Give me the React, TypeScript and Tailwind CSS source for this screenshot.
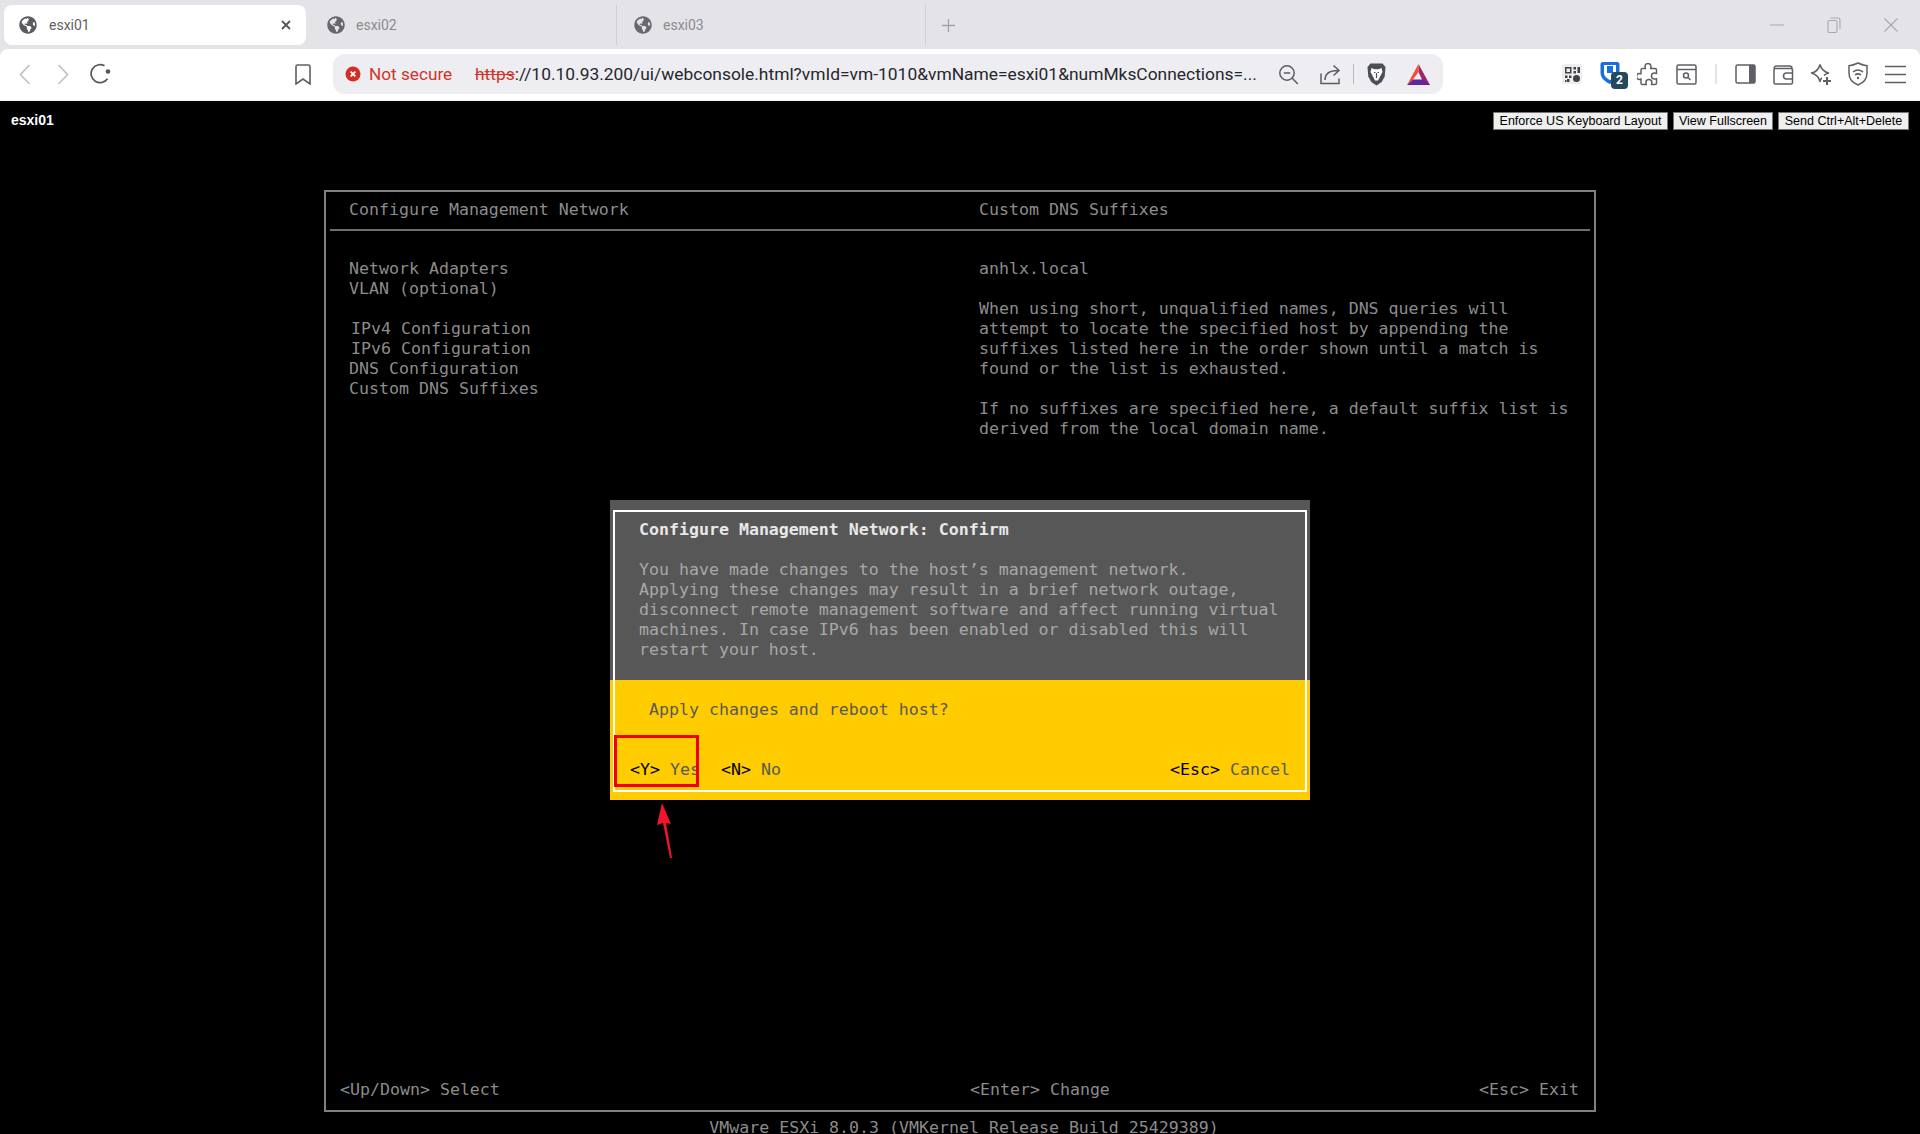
import React from "react";
import { FaGlobeAmericas } from "react-icons/fa";

const uiFont = "font-['Roboto','Liberation_Sans',sans-serif]";
const termFont = "font-['DejaVu_Sans_Mono','Liberation_Mono',monospace] text-[16.6px] leading-[20px] whitespace-pre";

const leftRows = ["Network Adapters", "VLAN (optional)", "", "IPv4 Configuration", "IPv6 Configuration", "DNS Configuration", "Custom DNS Suffixes"];
const rightRows = [
  "anhlx.local",
  "",
  "When using short, unqualified names, DNS queries will",
  "attempt to locate the specified host by appending the",
  "suffixes listed here in the order shown until a match is",
  "found or the list is exhausted.",
  "",
  "If no suffixes are specified here, a default suffix list is",
  "derived from the local domain name.",
];

const Slot = ({ children }: { children: React.ReactNode }) => (
  <div className="w-[38px] h-[40px] shrink-0 flex items-center justify-center relative">{children}</div>
);

const InactiveTab = ({ name, pad }: { name: string; pad: string }) => (
  <div className={`w-[309px] h-[40px] flex items-center gap-[11px] ${pad} border-r border-[#cfcfd4] text-[14px] text-[#8b8b8f]`}>
    <FaGlobeAmericas className="text-[#66686d]" size={18} />
    <span>{name}</span>
  </div>
);

const TabBar = () => (
  <div className={`h-[49px] shrink-0 bg-[#e3e3e8] flex items-center pl-[4px] pt-[1px] ${uiFont}`}>
    <div className="w-[302px] h-[40px] bg-white rounded-lg flex items-center pl-[15px] pr-[14px] text-[14px] text-[#5f6064]">
      <FaGlobeAmericas className="text-[#5a5c61]" size={18} />
      <span className="ml-[12px]">esxi01</span>
      <svg className="ml-auto" width="12" height="12" viewBox="0 0 12 12" fill="none" stroke="#55565a" strokeWidth="1.8">
        <path d="M2 2l8 8M10 2l-8 8" />
      </svg>
    </div>
    <div className="w-[2px]" />
    <InactiveTab name="esxi02" pad="pl-[19px]" />
    <InactiveTab name="esxi03" pad="pl-[17px]" />
    <svg className="ml-[16px]" width="13" height="13" viewBox="0 0 13 13" stroke="#a2a2a6" strokeWidth="1.3">
      <path d="M6.500 0v13M0 6.500h13" />
    </svg>
    <div className="ml-auto mr-[1px] flex">
      <div className="w-[57px] h-[40px] flex items-center justify-center">
        <svg width="14" height="2" viewBox="0 0 14 2" stroke="#a9a9ad"><path d="M0 1h14" /></svg>
      </div>
      <div className="w-[57px] h-[40px] flex items-center justify-center">
        <svg width="14" height="16" viewBox="0 0 14 16" fill="none" stroke="#a9a9ad" strokeWidth="1.1">
          <rect x="1" y="3.500" width="9" height="12" rx="1.500" />
          <path d="M3.500 1h7.500a2 2 0 0 1 2 2v9" />
        </svg>
      </div>
      <div className="w-[57px] h-[40px] flex items-center justify-center">
        <svg width="14" height="14" viewBox="0 0 14 14" stroke="#a9a9ad" strokeWidth="1.1"><path d="M0.500 0.500l13 13M13.500 0.500l-13 13" /></svg>
      </div>
    </div>
  </div>
);

const UrlBar = () => (
  <div className="ml-[11px] w-[1110px] h-[40px] rounded-xl bg-[#ededf2] flex items-center pl-[12px] shrink-0">
    <svg width="16" height="16" viewBox="0 0 16 16">
      <circle cx="8" cy="8" r="7.500" fill="#cf2f28" />
      <path d="M5.700 5.700l4.600 4.600M10.300 5.700l-4.600 4.600" stroke="#fff" strokeWidth="1.800" />
    </svg>
    <span className="ml-[8px] pt-[1px] w-[106px] text-[17.2px] text-[#d0342c]">Not secure</span>
    <span className="w-[790px] pt-[1px] text-[17.4px] text-[#26272b] whitespace-pre overflow-hidden">
      <span className="text-[#d0342c] line-through">https</span>://10.10.93.200/ui/webconsole.html?vmId=vm-1010&amp;vmName=esxi01&amp;numMksConnections=...
    </span>
    <div className="ml-[4px] flex items-center">
      <div className="w-[38px] flex justify-center">
        <svg width="21" height="21" viewBox="0 0 21 21" fill="none" stroke="#5b5c61" strokeWidth="1.500">
          <circle cx="9" cy="9" r="7.200" />
          <path d="M5.800 9h6.400M14.300 14.300l5.500 5.700" />
        </svg>
      </div>
      <div className="w-[46px] flex justify-center">
        <svg width="21" height="21" viewBox="0 0 21 21" fill="none" stroke="#5b5c61" strokeWidth="1.500">
          <path d="M1 9.500v10h18v-5" />
          <path d="M5 16c0-6 4-9.500 13-9.500M13.500 1.500l5.500 5-5.500 5" />
        </svg>
      </div>
      <div className="w-[1px] h-[20px] bg-[#b9b9be]" />
      <div className="ml-[12px] w-[20px] flex justify-center">
        <svg width="19" height="23" viewBox="0 0 19 23">
          <path d="M3.500 0.500h12l3 3.500-.8 9.500-3 5.500-5.200 3.500-5.200-3.500-3-5.500-.8-9.500z" fill="#4c4e57" />
          <path d="M4.500 5l3 1.200h4l3-1.200 1 4-2.200 4-2.300 4.500h-3l-2.300-4.500-2.200-4z" fill="#fff" />
          <path d="M7 9.500h1.500M10.500 9.500h1.500M9.500 10v5" stroke="#4c4e57" strokeWidth="1.200" />
        </svg>
      </div>
      <div className="ml-[20px] w-[24px] flex justify-center">
        <svg width="23" height="21" viewBox="0 0 23 21">
          <polygon points="11.500,0 23,21 17.500,21 11.500,8" fill="#a3236f" />
          <polygon points="11.500,0 0,21 6,15.500 11.500,8" fill="#f0502d" />
          <polygon points="0,21 23,21 17.500,15.500 6,15.500" fill="#63279a" />
        </svg>
      </div>
    </div>
  </div>
);

const ToolBar = () => (
  <div className="h-[52px] shrink-0 bg-white rounded-t-lg flex items-center pl-[6px] pb-[1px] border-b border-[#f4f4f6]">
    <Slot>
      <svg width="12" height="21" viewBox="0 0 12 21" fill="none" stroke="#c0c0c4" strokeWidth="1.600"><path d="M10.500 1L1.500 10.500 10.500 20" /></svg>
    </Slot>
    <Slot>
      <svg width="12" height="21" viewBox="0 0 12 21" fill="none" stroke="#c0c0c4" strokeWidth="1.600"><path d="M1.500 1l9 9.500-9 9.500" /></svg>
    </Slot>
    <Slot>
      <svg width="22" height="22" viewBox="0 0 22 22" fill="none" stroke="#55565b" strokeWidth="1.700">
        <path d="M17.500 15.800A9 9 0 1 1 14.500 2.800" />
        <circle cx="18" cy="8.500" r="2.300" fill="#55565b" stroke="none" />
      </svg>
    </Slot>
    <div className="ml-[164px]">
      <Slot>
        <svg width="16" height="21" viewBox="0 0 16 21" fill="none" stroke="#5f6065" strokeWidth="1.600"><path d="M1 2.500A1.500 1.500 0 0 1 2.500 1h11A1.500 1.500 0 0 1 15 2.500V20l-7-5-7 5z" /></svg>
      </Slot>
    </div>
    <UrlBar />
    <div className="ml-[110px] flex">
      <Slot>
        <div className="w-[20px] h-[20px] rounded-[2px] bg-[#eeeeee] flex items-center justify-center">
          <svg width="15" height="15" viewBox="0 0 15 15" fill="#3f4146">
            <path fillRule="evenodd" d="M0 0h6.500v6.500H0zM1.500 1.500v3.500h3.500V1.500zM8.500 0H11v2.500H8.500zM12.500 0H15v6h-2.500zM8.500 4H11v2.500H8.500zM0 8.500h2.500V11H0zM4 8.500h2.500V11H4zM2 12h2.500v3H2zM0 13h1.500v2H0z" />
            <circle cx="11.500" cy="11.500" r="3.500" />
          </svg>
        </div>
      </Slot>
      <Slot>
        <div className="relative w-[20px] h-[22px] -mt-[3px]">
          <svg width="20" height="22" viewBox="0 0 20 22">
            <path d="M3 0h14a2.500 2.500 0 0 1 2.500 2.500V11c0 5-5 9-9.500 11C5.500 20 .5 16 .5 11V2.500A2.500 2.500 0 0 1 3 0z" fill="#1a6de0" />
            <path d="M4 3h12v8c0 3-3 5.500-6 7-3-1.500-6-4-6-7z" fill="#fff" />
            <path d="M7 4h6v7H7z" fill="#1a6de0" />
          </svg>
          <span className={`absolute left-[11px] top-[10px] w-[17px] h-[17px] rounded-[4px] bg-[#24485c] text-white text-[12px] leading-[17px] font-bold text-center ${uiFont}`}>2</span>
        </div>
      </Slot>
      <Slot>
        <svg width="22" height="23" viewBox="0 0 22 23" fill="none" stroke="#5f6065" strokeWidth="1.500">
          <path d="M8 3.500a3 3 0 0 1 6 0c0 .8-.4 1.300-.4 2h4.400a1.500 1.500 0 0 1 1.500 1.500v3.500c-.7 0-1.200-.4-2-.4a3 3 0 0 0 0 6c.8 0 1.300-.4 2-.4V20a1.500 1.500 0 0 1-1.500 1.500h-3.500c0-.8.4-1.300.4-2a3 3 0 0 0-6 0c0 .7.400 1.200.400 2H5.500A1.500 1.500 0 0 1 4 20v-4c-.6 0-1 .4-1.500.4a3 3 0 0 1 0-6c.5 0 .9.400 1.500.4V7a1.500 1.500 0 0 1 1.500-1.500h2.900c0-.7-.4-1.200-.4-2z" />
        </svg>
      </Slot>
      <Slot>
        <svg width="21" height="21" viewBox="0 0 21 21" fill="none" stroke="#5f6065" strokeWidth="1.500">
          <rect x="1" y="1" width="19" height="19" rx="1.500" />
          <path d="M1 5.500h19" />
          <circle cx="10" cy="11.500" r="2.500" />
          <path d="M12 13.500l2.500 2.500" />
        </svg>
      </Slot>
    </div>
    <div className="ml-[10px] w-[2px] h-[20px] bg-[#e4e4e8]" />
    <div className="ml-[9px] flex">
      <Slot>
        <svg width="21" height="20" viewBox="0 0 21 20">
          <rect x="1" y="1" width="19" height="18" rx="1.500" fill="#fff" stroke="#5f6065" strokeWidth="1.500" />
          <path d="M14 1h4.500A1.500 1.500 0 0 1 20 2.500v15a1.500 1.500 0 0 1-1.500 1.500H14z" fill="#5f6065" />
        </svg>
      </Slot>
      <Slot>
        <svg width="21" height="21" viewBox="0 0 21 21" fill="none" stroke="#5f6065" strokeWidth="1.500">
          <path d="M1 4.500A2.500 2.500 0 0 1 3.500 2h13a2.500 2.500 0 0 1 2.500 2.500" />
          <rect x="1" y="4.500" width="18.500" height="15.500" rx="1.500" />
          <path d="M19.500 9h-6a3 3 0 0 0 0 6h6" />
        </svg>
      </Slot>
      <Slot>
        <svg width="22" height="23" viewBox="0 0 22 23" fill="none" stroke="#5f6065" strokeWidth="1.500">
          <path d="M10 1.500c1 4.500 3.500 7 8.500 8.500-2 .6-3.500 1.400-4.500 2.500M10 1.500C9 6 6 9 1.500 10 6 11.500 9 14 10 18.500c.4-1.500 1-2.800 1.800-3.800" strokeLinejoin="round" />
          <path d="M17 14v8M13 18h8" strokeWidth="2" />
        </svg>
      </Slot>
      <div className="-ml-[1px]">
        <Slot>
          <svg width="20" height="24" viewBox="0 0 20 24" fill="none" stroke="#5f6065" strokeWidth="1.500">
            <path d="M10 1c3 1.500 5.500 2.500 9 2.800V11c0 6-4 10-9 12-5-2-9-6-9-12V3.800C4.500 3.500 7 2.500 10 1z" />
            <path d="M5 10c3-2.500 7-2.500 10 0M7 13c2-1.500 4-1.500 6 0" />
            <circle cx="10" cy="16" r="1.200" fill="#5f6065" stroke="none" />
          </svg>
        </Slot>
      </div>
      <div className="-ml-[1px]">
        <Slot>
          <svg width="21" height="19" viewBox="0 0 21 19" stroke="#5f6065" strokeWidth="1.600"><path d="M0 1.500h21M0 9.500h21M0 17.500h21" /></svg>
        </Slot>
      </div>
    </div>
  </div>
);

const ConsoleButton = ({ label, width }: { label: string; width: string }) => (
  <button className={`${width} h-[18px] bg-[#efefef] border border-[#767676] text-black text-[12.5px] leading-[14px] text-center font-['Liberation_Sans',sans-serif] whitespace-nowrap`}>
    {label}
  </button>
);

const Dialog = () => (
  <div className={`absolute left-[610px] top-[399px] w-[700px] h-[300px] flex flex-col ${termFont}`}>
    <div className="h-[180px] bg-[#575757] pl-[29px] pt-[20px] text-[#a8a8a8]">
      <div className="text-[#e8e8e8] font-bold">Configure Management Network: Confirm</div>
      <div className="mt-[20px]">
        <div>You have made changes to the host’s management network.</div>
        <div>Applying these changes may result in a brief network outage,</div>
        <div>disconnect remote management software and affect running virtual</div>
        <div>machines. In case IPv6 has been enabled or disabled this will</div>
        <div>restart your host.</div>
      </div>
    </div>
    <div className="h-[120px] bg-[#ffcc00] text-[#595959]">
      <div className="pl-[39px] pt-[20px]">Apply changes and reboot host?</div>
      <div className="mt-[40px] pl-[20px] pr-[20px] flex">
        <span><span className="text-black">&lt;Y&gt;</span> Yes</span>
        <span className="ml-[21px]"><span className="text-black">&lt;N&gt;</span> No</span>
        <span className="ml-auto"><span className="text-black">&lt;Esc&gt;</span> Cancel</span>
      </div>
    </div>
    <div className="absolute left-[3px] top-[10px] w-[694px] h-[282px] border-2 border-white" />
    <div className="absolute left-[4px] top-[235px] w-[85px] h-[52px] border-[3px] border-[#f00000]" />
    <svg className="absolute left-[41px] top-[300px]" width="30" height="62" viewBox="0 0 30 62">
      <polygon points="11,3 20,24 15,23 21,58 19,58 12,23 6,25" fill="#f0142d" />
    </svg>
  </div>
);

const ConsoleArea = () => (
  <div className="relative flex-1 bg-black overflow-hidden">
    <div className="flex items-start pt-[11px] pr-[11px] h-[28px]">
      <span className="ml-[11px] text-white text-[14px] leading-[17px] font-bold font-['Liberation_Sans',sans-serif]">esxi01</span>
      <div className="ml-auto flex gap-[5px]">
        <ConsoleButton label="Enforce US Keyboard Layout" width="w-[175px]" />
        <ConsoleButton label="View Fullscreen" width="w-[100px]" />
        <ConsoleButton label="Send Ctrl+Alt+Delete" width="w-[131px]" />
      </div>
    </div>
    <div className={`mt-[61px] ml-[324px] w-[1272px] h-[922px] border-2 border-[#808080] flex flex-col text-[#8c8c8c] ${termFont}`}>
      <div className="pt-[8px] pl-[23px] flex">
        <div className="w-[630px]">Configure Management Network</div>
        <div>Custom DNS Suffixes</div>
      </div>
      <div className="mt-[9px] mx-[4px] h-[2px] bg-[#6f6f6f]" />
      <div className="mt-[28px] pl-[23px] flex flex-1">
        <div className="w-[630px]">
          {leftRows.map((row, i) => (
            <div key={i} className={`h-[20px] ${row.startsWith("IPv") ? "pl-[2px]" : ""}`}>{row}</div>
          ))}
        </div>
        <div>
          {rightRows.map((row, i) => (
            <div key={i} className="h-[20px]">{row}</div>
          ))}
        </div>
      </div>
      <div className="pl-[14px] pr-[15px] pb-[10px] flex">
        <div className="w-[630px]">&lt;Up/Down&gt; Select</div>
        <div>&lt;Enter&gt; Change</div>
        <div className="ml-auto">&lt;Esc&gt; Exit</div>
      </div>
    </div>
    <div className={`mt-[6px] pl-[8px] text-center text-[#8c8c8c] ${termFont}`}>VMware ESXi 8.0.3 (VMKernel Release Build 25429389)</div>
    <Dialog />
  </div>
);

export default function App() {
  return (
    <div className={`w-[1920px] h-[1134px] flex flex-col overflow-hidden bg-[#e3e3e8] ${uiFont}`}>
      <TabBar />
      <ToolBar />
      <ConsoleArea />
    </div>
  );
}
